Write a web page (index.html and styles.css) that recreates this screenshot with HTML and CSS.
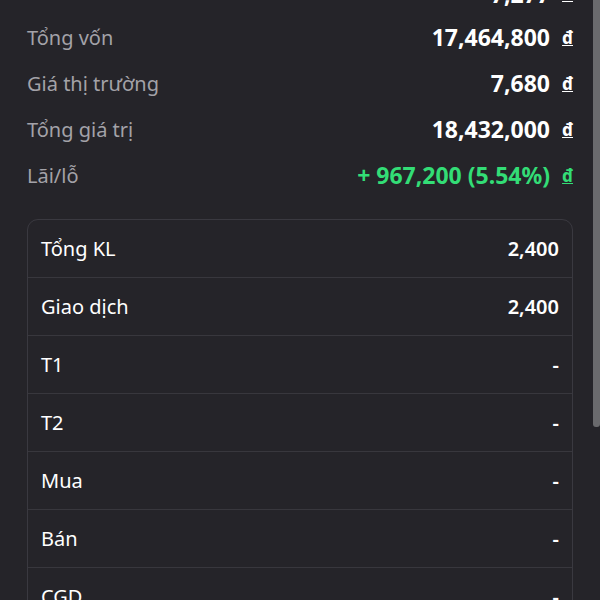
FILE: index.html
```html
<!DOCTYPE html>
<html lang="vi">
<head>
<meta charset="utf-8">
<link rel="stylesheet" href="styles.css">
</head>
<body>
<main class="page">
  <section class="summary">
    <div class="sum-row partial"><span class="value">7,277 <u class="cur">đ</u></span></div>
    <div class="sum-row"><span class="label">Tổng vốn</span><span class="value">17,464,800 <u class="cur">đ</u></span></div>
    <div class="sum-row"><span class="label">Giá thị trường</span><span class="value">7,680 <u class="cur">đ</u></span></div>
    <div class="sum-row"><span class="label">Tổng giá trị</span><span class="value">18,432,000 <u class="cur">đ</u></span></div>
    <div class="sum-row"><span class="label">Lãi/lỗ</span><span class="value up">+ 967,200 (5.54%) <u class="cur">đ</u></span></div>
  </section>
  <section class="card">
    <div class="row"><span>Tổng KL</span><span class="num">2,400</span></div>
    <div class="row"><span>Giao dịch</span><span class="num">2,400</span></div>
    <div class="row"><span>T1</span><span class="num">-</span></div>
    <div class="row"><span>T2</span><span class="num">-</span></div>
    <div class="row"><span>Mua</span><span class="num">-</span></div>
    <div class="row"><span>Bán</span><span class="num">-</span></div>
    <div class="row"><span>CGD</span><span class="num">-</span></div>
    <div class="row"><span>Cầm cố</span><span class="num">-</span></div>
    <div class="row"><span>Phong tỏa</span><span class="num">-</span></div>
    <div class="row"><span>Quyền</span><span class="num">-</span></div>
  </section>
</main>
<div class="scroll-thumb"></div>
</body>
</html>
```
FILE: styles.css
```css
html {
  background: #252429;
}
body {
  margin: 0;
  font-family: "Noto Sans", "Open Sans", sans-serif;
  color: #ffffff;
}
.page {
  padding: 0 27px 44px 27px;
}
.summary {
  display: flex;
  flex-direction: column;
  margin-top: -23px;
}
.sum-row {
  height: 46px;
  display: flex;
  align-items: center;
  justify-content: space-between;
}
.sum-row.partial {
  height: 37px;
  justify-content: flex-end;
  margin-top: -2px;
  margin-bottom: 2px;
}
.label {
  font-size: 20px;
  color: #a3a2a8;
}
.value {
  font-size: 23px;
  font-weight: 700;
  color: #ffffff;
  display: flex;
  align-items: center;
  gap: 12px;
}
.value.up {
  color: #33dd76;
}
.cur {
  font-size: 17px;
  font-weight: 700;
}
.card {
  margin-top: 21px;
  border: 1px solid #3a3940;
  border-radius: 11px;
  overflow: hidden;
}
.row {
  height: 57px;
  display: flex;
  align-items: center;
  justify-content: space-between;
  padding: 0 13px;
  font-size: 20px;
  border-bottom: 1px solid #38373d;
}
.num {
  font-weight: 600;
}
.scroll-thumb {
  position: fixed;
  top: 0;
  right: 0;
  width: 7px;
  height: 427px;
  background: #6a6a6d;
  border-radius: 0 0 3px 3px;
}
```
